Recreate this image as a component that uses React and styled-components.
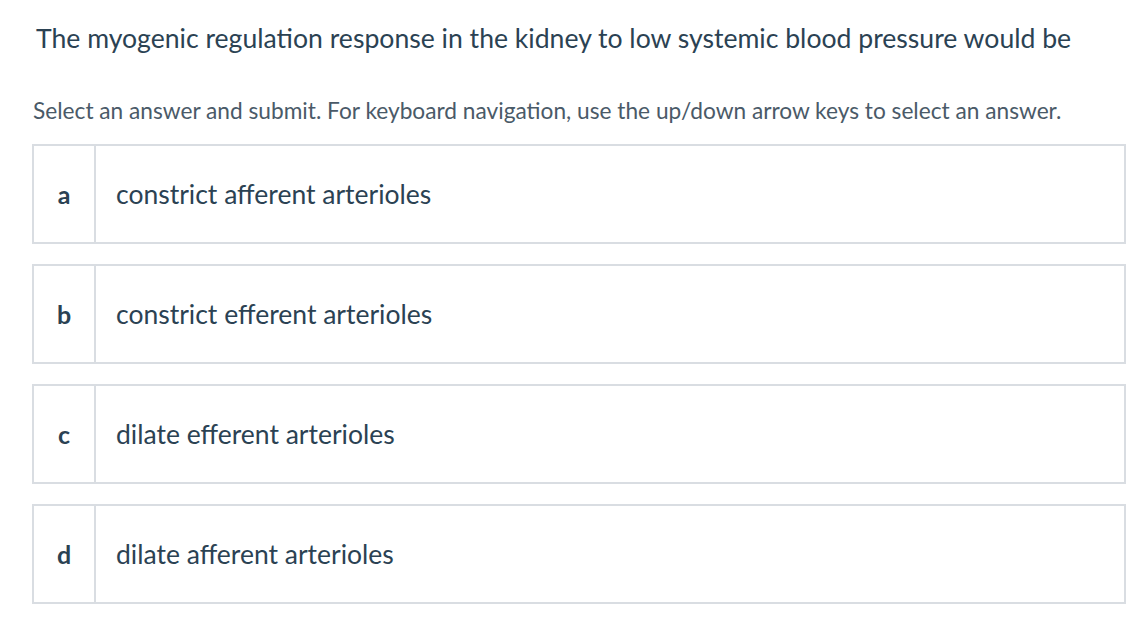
import React from "react";
import styled, { createGlobalStyle } from "styled-components";

const GlobalStyle = createGlobalStyle`
  body {
    margin: 0;
    background: #ffffff;
    font-family: Lato, "Noto Sans", sans-serif;
  }
`;

const PageSC = styled.div`
  padding: 20px 14px 0 32px;
  color: #2d4051;
`;

const TitleSC = styled.h1`
  margin: 0 0 0 4px;
  font-size: 26.6px;
  font-weight: 400;
  line-height: 36px;
  color: #2b4253;
`;

const HintSC = styled.p`
  margin: 39px 0 17px 1px;
  font-size: 22.7px;
  line-height: 32px;
  color: #4a5a68;
`;

const ListSC = styled.div`
  display: flex;
  flex-direction: column;
  gap: 20px;
`;

const OptionSC = styled.div`
  display: flex;
  height: 100px;
  box-sizing: border-box;
  border: 2px solid #d9dde2;
  background: #ffffff;
  cursor: pointer;
`;

const LetterSC = styled.div`
  width: 60px;
  flex: none;
  display: flex;
  align-items: center;
  justify-content: center;
  border-right: 2px solid #d9dde2;
  font-size: 25px;
  font-weight: 700;
  color: #2b4253;
`;

const AnswerSC = styled.div`
  display: flex;
  align-items: center;
  padding-left: 20px;
  font-size: 26.5px;
  color: #2b4253;
`;

const answers = [
  { key: "a", text: "constrict afferent arterioles" },
  { key: "b", text: "constrict efferent arterioles" },
  { key: "c", text: "dilate efferent arterioles" },
  { key: "d", text: "dilate afferent arterioles" },
];

const App = () => {
  return (
    <>
      <GlobalStyle />
      <PageSC>
        <TitleSC>
          The myogenic regulation response in the kidney to low systemic blood
          pressure would be
        </TitleSC>
        <HintSC>
          Select an answer and submit. For keyboard navigation, use the
          up/down arrow keys to select an answer.
        </HintSC>
        <ListSC>
          {answers.map(a => (
            <OptionSC key={a.key}>
              <LetterSC>{a.key}</LetterSC>
              <AnswerSC>{a.text}</AnswerSC>
            </OptionSC>
          ))}
        </ListSC>
      </PageSC>
    </>
  );
};

export default App;
